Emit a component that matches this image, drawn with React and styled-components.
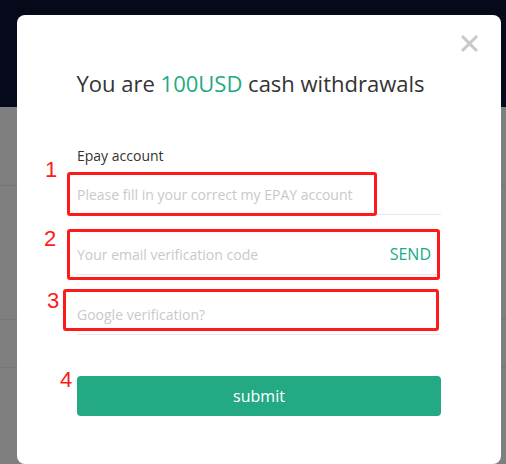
import React from "react";
import styled, { createGlobalStyle } from "styled-components";

const Global = createGlobalStyle`
  html, body { margin: 0; padding: 0; }
  body {
    font-family: "Open Sans", "Noto Sans", sans-serif;
    background: #7f7f7f;
    width: 506px;
    height: 464px;
    overflow: hidden;
  }
`;

const Page = styled.div`
  display: flex;
  flex-direction: column;
  height: 464px;
`;

const Header = styled.div`
  height: 107px;
  background: #060919;
  flex: none;
`;

const Content = styled.div`
  flex: 1;
  display: flex;
  flex-direction: column;
  background: #7f7f7f;
`;

const BgRow = styled.div`
  height: ${(p) => p.$h}px;
  border-bottom: 1px solid #767676;
  box-sizing: border-box;
`;

const Modal = styled.div`
  position: fixed;
  top: 15px;
  left: 17px;
  width: 484px;
  height: 449px;
  background: #fff;
  border-radius: 8px;
  box-sizing: border-box;
  padding: 53px 60px 0 60px;
  display: flex;
  flex-direction: column;
`;

const Close = styled.button`
  position: absolute;
  top: 19px;
  right: 22px;
  width: 19px;
  height: 19px;
  padding: 0;
  border: 0;
  background: transparent;
  display: flex;
  align-items: center;
  justify-content: center;
  cursor: pointer;
`;

const Title = styled.h2`
  margin: 0 -60px;
  padding-right: 17px;
  font-size: 22px;
  line-height: 30px;
  font-weight: 400;
  color: #333;
  text-align: center;
  white-space: nowrap;
`;

const Green = styled.span`
  color: #22aa84;
`;

const Form = styled.div`
  margin-top: 48px;
  display: flex;
  flex-direction: column;
`;

const Label = styled.div`
  font-size: 14px;
  line-height: 20px;
  color: #333;
  margin-bottom: 8px;
`;

const Field = styled.div`
  position: relative;
  height: 41px;
  box-sizing: border-box;
  border-bottom: 1px solid #e8e8e8;
  display: flex;
  align-items: center;
  margin-bottom: ${(p) => p.$gap || 0}px;
`;

const Input = styled.input`
  flex: 1;
  min-width: 0;
  border: 0;
  outline: none;
  background: transparent;
  font-family: inherit;
  font-size: 14px;
  color: #333;
  padding: 0;
  height: 100%;
  &::placeholder {
    color: #c9c9c9;
  }
`;

const Send = styled.span`
  font-size: 16px;
  color: #22aa84;
  margin-right: 10px;
  cursor: pointer;
`;

const Marker = styled.div`
  position: absolute;
  left: ${(p) => p.$l}px;
  top: ${(p) => p.$t}px;
  width: ${(p) => p.$w}px;
  height: ${(p) => p.$h}px;
  border: 3px solid #ff1a1a;
  border-radius: 3px;
  box-sizing: border-box;
  pointer-events: none;
`;

const Num = styled.span`
  position: absolute;
  left: ${(p) => p.$l}px;
  top: ${(p) => p.$t}px;
  font-family: "Liberation Sans", Arial, sans-serif;
  font-size: 22px;
  line-height: 22px;
  color: #ff1a1a;
`;

const ButtonWrap = styled.div`
  position: relative;
  margin-top: 41px;
`;

const Submit = styled.button`
  width: 100%;
  height: 40px;
  border: 0;
  border-radius: 4px;
  background: #23aa84;
  color: #fff;
  font-family: inherit;
  font-size: 16px;
  cursor: pointer;
`;

export default function App() {
  return (
    <>
      <Global />
      <Page>
        <Header />
        <Content>
          <BgRow $h={79} />
          <BgRow $h={134} />
          <BgRow $h={48} />
        </Content>
      </Page>
      <Modal>
        <Close aria-label="close">
          <svg width="19" height="19" viewBox="0 0 19 19">
            <path d="M2 2 L17 17 M17 2 L2 17" stroke="#c8c8c8" strokeWidth="3" />
          </svg>
        </Close>
        <Title>
          You are <Green>100USD</Green> cash withdrawals
        </Title>
        <Form>
          <Label>Epay account</Label>
          <Field $gap={19}>
            <Input placeholder="Please fill in your correct my EPAY account" />
            <Marker $l={-10} $t={-2} $w={310} $h={44} />
            <Num $l={-32} $t={-15}>1</Num>
          </Field>
          <Field $gap={19}>
            <Input placeholder="Your email verification code" />
            <Send>SEND</Send>
            <Marker $l={-10} $t={-5} $w={373} $h={51} />
            <Num $l={-33} $t={-6}>2</Num>
          </Field>
          <Field>
            <Input placeholder="Google verification?" />
            <Marker $l={-14} $t={-5} $w={376} $h={42} />
            <Num $l={-30} $t={-4}>3</Num>
          </Field>
          <ButtonWrap>
            <Submit>submit</Submit>
            <Num $l={-17} $t={-7}>4</Num>
          </ButtonWrap>
        </Form>
      </Modal>
    </>
  );
}
